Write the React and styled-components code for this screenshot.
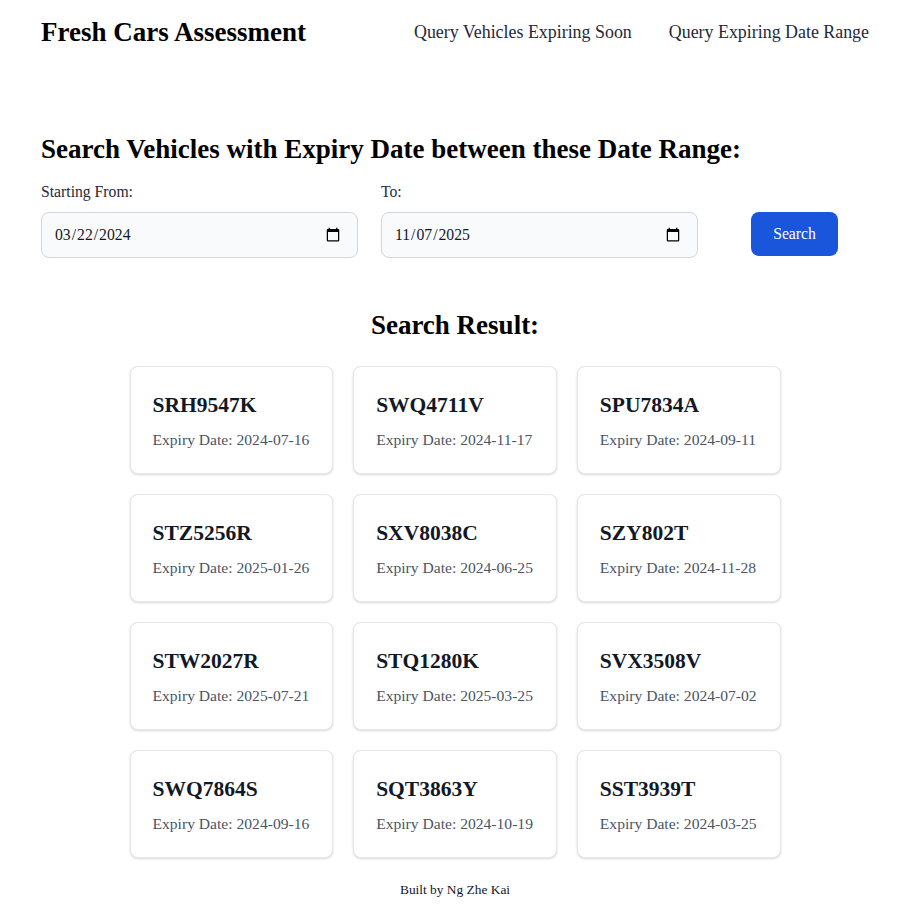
import React from "react";
import styled, { createGlobalStyle } from "styled-components";

const Global = createGlobalStyle`
  html, body { margin: 0; padding: 0; background: #fff; }
  body { font-family: "Liberation Serif", "Times New Roman", serif; color: #111827; }
  * { box-sizing: border-box; }
`;

const Page = styled.div`
  padding: 0 34px 0 41px;
`;

const Header = styled.header`
  height: 64px;
  display: flex;
  align-items: center;
  justify-content: space-between;
`;

const Brand = styled.div`
  font-size: 27px;
  font-weight: 700;
  color: #000;
`;

const Nav = styled.nav`
  display: flex;
  gap: 37px;
`;

const NavLink = styled.a`
  font-size: 17.9px;
  color: #1f2937;
  text-decoration: none;
  cursor: pointer;
`;

const Heading = styled.h2`
  margin: 70px 0 0;
  font-size: 27px;
  line-height: 30px;
  font-weight: 700;
  color: #000;
`;

const FormRow = styled.div`
  display: flex;
  align-items: flex-end;
  margin-top: 19px;
`;

const Field = styled.div`
  display: flex;
  flex-direction: column;
  gap: 11px;
  width: 317px;
  margin-right: ${(p) => p.$gap || 0}px;
`;

const Label = styled.label`
  font-size: 15.7px;
  line-height: 18px;
  color: #1f2937;
`;

const DateInput = styled.input`
  height: 46px;
  width: 100%;
  padding: 0 14px 0 12px;
  border: 1px solid #d1d5db;
  border-radius: 8px;
  background: #f9fafb;
  font-family: "Liberation Serif", "Times New Roman", serif;
  font-size: 15.7px;
  color: #111827;
`;

const Button = styled.button`
  width: 87px;
  height: 44px;
  margin-bottom: 2px;
  border: none;
  border-radius: 8px;
  background: #1a56db;
  color: #fff;
  font-family: "Liberation Serif", "Times New Roman", serif;
  font-size: 15.7px;
  cursor: pointer;
`;

const ResultTitle = styled.h2`
  margin: 52px 0 0;
  text-align: center;
  font-size: 27px;
  line-height: 30px;
  font-weight: 700;
  color: #000;
`;

const Grid = styled.div`
  display: grid;
  grid-template-columns: repeat(3, minmax(0, 1fr));
  gap: 20px;
  max-width: 651px;
  margin: 26px auto 0;
`;

const Card = styled.div`
  border: 1px solid #e5e7eb;
  border-radius: 8px;
  background: #fff;
  box-shadow: 0 1px 3px rgba(0, 0, 0, 0.1), 0 1px 2px rgba(0, 0, 0, 0.06);
  padding: 25px 20px 24px 22px;
  white-space: nowrap;
`;

const Plate = styled.div`
  font-size: 21.5px;
  line-height: 27px;
  font-weight: 700;
  color: #111827;
`;

const Expiry = styled.div`
  margin-top: 11px;
  font-size: 15.6px;
  line-height: 19px;
  color: #4b5563;
`;

const Footer = styled.footer`
  margin-top: 24px;
  text-align: center;
  font-size: 13.4px;
  line-height: 16px;
  color: #111827;
  padding-bottom: 10px;
`;

const results = [
  ["SRH9547K", "2024-07-16"],
  ["SWQ4711V", "2024-11-17"],
  ["SPU7834A", "2024-09-11"],
  ["STZ5256R", "2025-01-26"],
  ["SXV8038C", "2024-06-25"],
  ["SZY802T", "2024-11-28"],
  ["STW2027R", "2025-07-21"],
  ["STQ1280K", "2025-03-25"],
  ["SVX3508V", "2024-07-02"],
  ["SWQ7864S", "2024-09-16"],
  ["SQT3863Y", "2024-10-19"],
  ["SST3939T", "2024-03-25"],
];

export default function App() {
  return (
    <Page>
      <Global />
      <Header>
        <Brand>Fresh Cars Assessment</Brand>
        <Nav>
          <NavLink>Query Vehicles Expiring Soon</NavLink>
          <NavLink>Query Expiring Date Range</NavLink>
        </Nav>
      </Header>
      <Heading>Search Vehicles with Expiry Date between these Date Range:</Heading>
      <FormRow>
        <Field $gap={23}>
          <Label htmlFor="from">Starting From:</Label>
          <DateInput id="from" type="date" defaultValue="2024-03-22" />
        </Field>
        <Field $gap={53}>
          <Label htmlFor="to">To:</Label>
          <DateInput id="to" type="date" defaultValue="2025-11-07" />
        </Field>
        <Button>Search</Button>
      </FormRow>
      <ResultTitle>Search Result:</ResultTitle>
      <Grid>
        {results.map(([plate, date]) => (
          <Card key={plate}>
            <Plate>{plate}</Plate>
            <Expiry>Expiry Date: {date}</Expiry>
          </Card>
        ))}
      </Grid>
      <Footer>Built by Ng Zhe Kai</Footer>
    </Page>
  );
}
